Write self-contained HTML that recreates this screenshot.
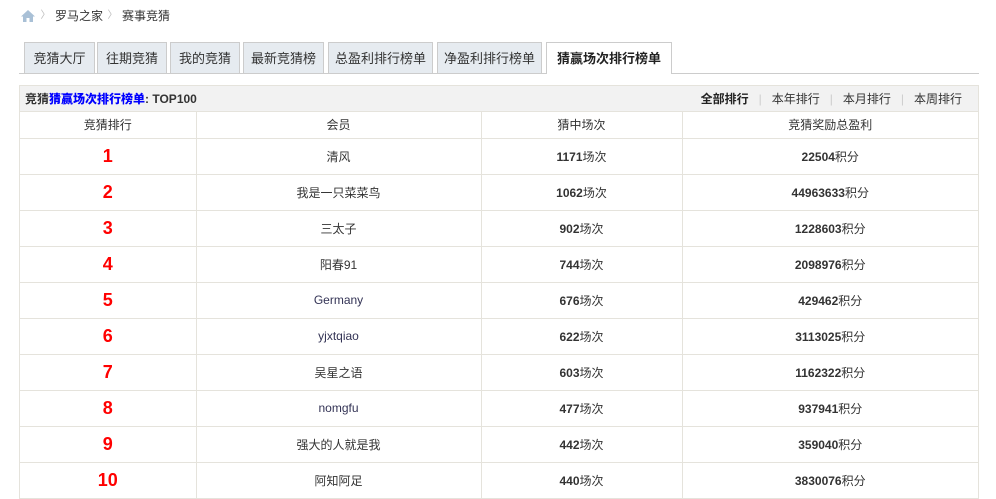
<!DOCTYPE html>
<html><head><meta charset="utf-8"><style>
*{margin:0;padding:0;box-sizing:border-box}
body{width:996px;height:497px;overflow:hidden;background:#fff;font-family:"Liberation Sans","Noto Sans CJK SC",sans-serif;font-size:12px;color:#333;position:relative}
.bc{position:absolute;top:8px;left:20px;height:16px;line-height:16px;font-size:12px;color:#333;white-space:nowrap}
.bc span,.bc svg{display:inline-block;vertical-align:top}
.sep{color:#bbb;width:19px;text-align:center;font-size:10px}
.tabs{position:absolute;top:42px;left:19px;width:960px;height:32px;border-bottom:1px solid #ccc}
.tab{position:absolute;top:0;height:31px;border:1px solid #ccc;border-bottom:none;background:#e6ebf0;text-align:center;line-height:31px;font-size:13px;color:#333}
.tab.on{background:#fff;height:32px;font-weight:bold;color:#222}
.box{position:absolute;top:85px;left:19px;width:960px;border:1px solid #e5e3dc;border-bottom:none}
.title{height:26px;background:#f2f2f2;line-height:26px;padding-left:5px;font-weight:bold;font-size:12px;border-bottom:1px solid #e5e3dc;position:relative}
.title b{color:#00f}
.title .r{position:absolute;right:16px;top:0;font-weight:normal}
.title .r i{font-style:normal;color:#ccc;margin:0 10px}
table{border-collapse:collapse;width:100%}
td{border:1px solid #e5e3dc;text-align:center;font-size:12px;padding:0}
tr.h td{height:26px;border-top:none}
tr.d td{height:36px}
td.n{color:#f00;font-weight:bold;font-size:18px}
td.u{color:#333355}
b.k{color:#333}
tr td:first-child{border-left:none}
tr td:last-child{border-right:none}
</style></head><body>
<div class="bc"><svg width="16" height="14" viewBox="0 0 16 14" style="margin-top:1px"><path d="M8 1L1 7.5h2V13h3.5V9h3v4H13V7.5h2z" fill="#a9c0d6"/></svg><span class="sep">〉</span><span>罗马之家</span><span class="sep">〉</span><span>赛事竞猜</span></div>
<div class="tabs">
<div class="tab" style="left:5px;width:71px">竞猜大厅</div>
<div class="tab" style="left:78px;width:70px">往期竞猜</div>
<div class="tab" style="left:151px;width:70px">我的竞猜</div>
<div class="tab" style="left:224px;width:81px">最新竞猜榜</div>
<div class="tab" style="left:309px;width:105px">总盈利排行榜单</div>
<div class="tab" style="left:418px;width:105px">净盈利排行榜单</div>
<div class="tab on" style="left:527px;width:126px">猜赢场次排行榜单</div>
</div>
<div class="box">
<div class="title">竞猜<b>猜赢场次排行榜单</b>: TOP100<div class="r"><b style="color:#222">全部排行</b><i>|</i>本年排行<i>|</i>本月排行<i>|</i>本周排行</div></div>
<table>
<tr class="h"><td style="width:176px">竞猜排行</td><td style="width:285px">会员</td><td style="width:201px">猜中场次</td><td>竞猜奖励总盈利</td></tr>
<tr class="d"><td class="n">1</td><td>清风</td><td><b class="k">1171</b>场次</td><td><b class="k">22504</b>积分</td></tr>
<tr class="d"><td class="n">2</td><td>我是一只菜菜鸟</td><td><b class="k">1062</b>场次</td><td><b class="k">44963633</b>积分</td></tr>
<tr class="d"><td class="n">3</td><td>三太子</td><td><b class="k">902</b>场次</td><td><b class="k">1228603</b>积分</td></tr>
<tr class="d"><td class="n">4</td><td>阳春91</td><td><b class="k">744</b>场次</td><td><b class="k">2098976</b>积分</td></tr>
<tr class="d"><td class="n">5</td><td class="u">Germany</td><td><b class="k">676</b>场次</td><td><b class="k">429462</b>积分</td></tr>
<tr class="d"><td class="n">6</td><td class="u">yjxtqiao</td><td><b class="k">622</b>场次</td><td><b class="k">3113025</b>积分</td></tr>
<tr class="d"><td class="n">7</td><td>吴星之语</td><td><b class="k">603</b>场次</td><td><b class="k">1162322</b>积分</td></tr>
<tr class="d"><td class="n">8</td><td class="u">nomgfu</td><td><b class="k">477</b>场次</td><td><b class="k">937941</b>积分</td></tr>
<tr class="d"><td class="n">9</td><td>强大的人就是我</td><td><b class="k">442</b>场次</td><td><b class="k">359040</b>积分</td></tr>
<tr class="d"><td class="n">10</td><td>阿知阿足</td><td><b class="k">440</b>场次</td><td><b class="k">3830076</b>积分</td></tr>
</table>
</div>
</body></html>
